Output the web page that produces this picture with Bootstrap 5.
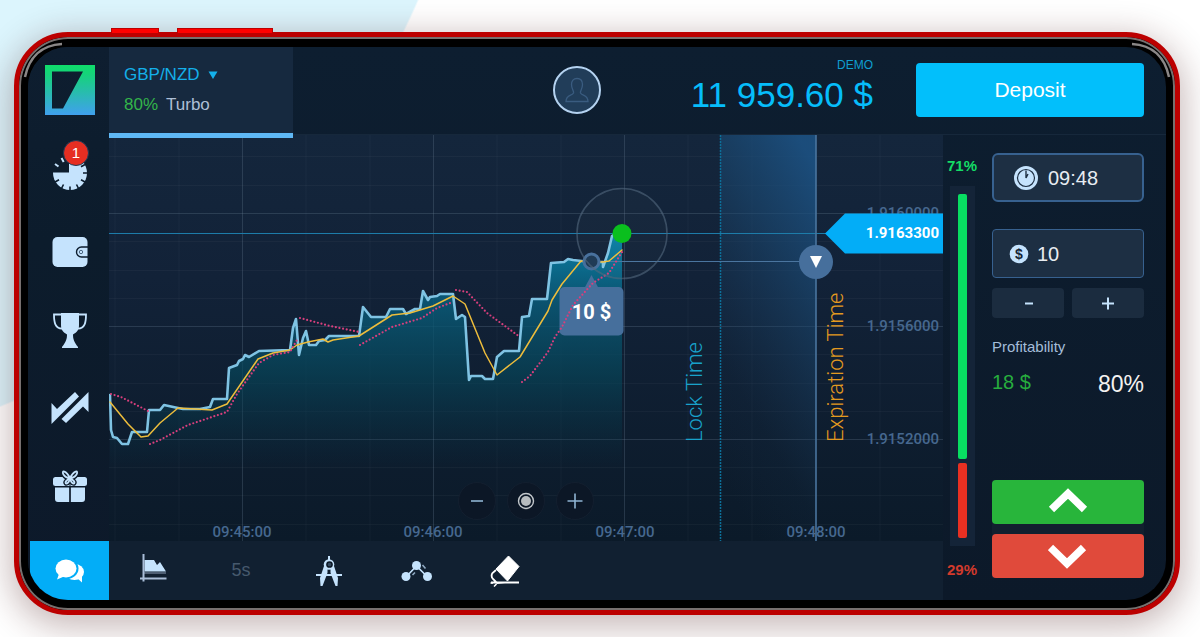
<!DOCTYPE html>
<html lang="en">
<head>
<meta charset="utf-8">
<meta name="viewport" content="width=device-width, initial-scale=1">
<title>Trading terminal</title>
<link href="https://cdn.jsdelivr.net/npm/bootstrap@5.3.0/dist/css/bootstrap.min.css" rel="stylesheet">
<style>
  :root { --ice: #c5e3fd; --sky: #03adf7; --ink: #0d1b2b; }
  body {
    font-family: "Liberation Sans", Arial, sans-serif; color: var(--ice);
    padding: 32px 20px 22px 14px;
    background: radial-gradient(circle at -290px -310px, #dcf5fd 772px, #fff 774px) no-repeat;
    overflow-x: hidden;
  }
  /* phone shell */
  .phone {
    background: #000; border: 5px solid #bc0000; border-radius: 54px;
    padding: 10px 9px; box-shadow: inset 0 0 0 2px #77706f, 0 8px 34px 4px rgba(70, 20, 20, .3);
  }
  .side-key { top: -9px; height: 5px; background: #ff0000; border: 1px solid #bc0000; border-bottom: 0; }
  .key-short { left: 92px; width: 48px; }
  .key-long { left: 158px; width: 96px; }
  .gleam { top: 3px; width: 42px; height: 40px; }
  .gleam-l { left: 2px; }
  .gleam-r { right: 2px; transform: scaleX(-1); }
  .screen { border-radius: 40px; background: linear-gradient(#0d1e30, #0c1929); }

  .rail { width: 81px; padding-left: 2px; background: linear-gradient(#0e1e30, #0c1c2c 35%, #0d192a); }
  .logo { margin: 18px 0 20px; }
  .rail-btn { height: 78px; border: 0; background: none; }
  .alert-count {
    width: 26px; height: 26px; top: 5px; left: 33px; border: 1px solid #1d3b58;
    background: #e62e22; font-size: 15px; line-height: 24px; color: #fff;
  }
  .chat-btn { height: 59px; border: 0; background: var(--sky); }

  .topbar { height: 88px; border-bottom: 1px solid #16283b; }
  .pair-tab {
    width: 184px; height: 91px; padding: 17px 15px; border: 0; border-bottom: 5px solid #5fb8f5;
    background: #16293f; font-size: 17px; line-height: 20px; z-index: 1; margin-bottom: -3px;
  }
  .pair-name { color: #14b0ea; margin-bottom: 10px; }
  .gain { color: #33b54a; }
  .soft { color: #aebfd6; }
  .account { height: 86px; }
  .avatar { width: 48px; height: 48px; border: 2px solid #b4d2f0; background: #213d59; margin-right: 90px; }
  .balance { color: #06bdfb; margin-right: 43px; padding-bottom: 7px; }
  .balance small { font-size: 12px; line-height: 14px; color: #0f9fd0; }
  .balance strong { font-size: 35px; line-height: 40px; font-weight: 400; padding-top: 3px; }
  .deposit { width: 228px; height: 54px; margin-right: 22px; background: #02bffb !important; color: #fff !important; font-size: 21px; border: 0; border-radius: 4px; }

  .chart { background: linear-gradient(#14263c, #122238 35%, #0b1a29); }
  .chart svg.plot { font-family: Roboto, sans-serif; font-size: 15px; font-weight: 500; }
  .zoomers { bottom: 21px; left: 0; gap: 11px; }
  .zoomers button { width: 38px; height: 38px; border: 1px solid #131f2f; background: #0c1726; }
  .tools { height: 59px; background: #112031; }
  .tools button { width: 88px; border: 0; background: none; font-size: 18px; color: #46596d; }

  .mood { width: 38px; font-size: 15px; font-weight: 700; line-height: 20px; padding: 21px 0 20px; }
  .up-text { color: #14dd66; }
  .down-text { color: #d33a2c; }
  .track { width: 25px; margin: 10px 0 14px; padding: 8px 0; gap: 4px; background: #142438; }
  .track div { width: 9px; border-radius: 2px; }
  .bull { flex: 71; background: #08df62; }
  .bear { flex: 20; background: #e83022; }

  .order { width: 185px; padding: 18px 22px 22px 11px; }
  .field { height: 49px; background: #1d2f43; border: 1px solid #37618f; border-radius: 4px; }
  .field input { background: none; border: 0; outline: 0; color: #e8ecf1; font-size: 20px; line-height: 24px; width: 0; }
  .field-time { border-width: 2px; border-radius: 6px; margin-bottom: 27px; padding: 0 20px; gap: 10px; }
  .field-sum { padding: 0 16px; gap: 8px; margin-bottom: 10px; }
  .steps { gap: 8px; margin-bottom: 19px; }
  .steps button { height: 30px; background: #1b2c3f; border: 0; border-radius: 4px; }
  .profit-label { font-size: 15px; line-height: 20px; color: #a4bdd9; margin-bottom: 12px; }
  .profit-sum { font-size: 20px; color: #27ad3e; line-height: 26px; }
  .profit-rate { font-size: 23px; color: #f4f2f0; line-height: 30px; }
  .deal { gap: 10px; background: #12202f; }
  .deal button { height: 44px; border: 0; border-radius: 4px; }
  .call { background: #28b53b; }
  .put { background: #e04a3b; }
</style>
</head>
<body class="min-vh-100 d-flex">
<div class="phone position-relative d-flex flex-grow-1">
  <span class="side-key key-short position-absolute"></span>
  <span class="side-key key-long position-absolute"></span>
  <svg class="gleam gleam-l position-absolute" viewBox="0 0 42 40" fill="none" stroke="#8a8787" stroke-width="2.500"><path d="M4 37C8 18 20 5 41 4"/></svg>
  <svg class="gleam gleam-r position-absolute" viewBox="0 0 42 40" fill="none" stroke="#8a8787" stroke-width="2.500"><path d="M4 37C8 18 20 5 41 4"/></svg>

  <div class="screen d-flex flex-grow-1 overflow-hidden">
    <!-- left rail -->
    <nav class="rail d-flex flex-column flex-shrink-0" aria-label="Sections">
      <a href="#" class="logo mx-auto d-block lh-1" aria-label="Home">
        <svg width="50" height="50" viewBox="0 0 50 50">
          <defs><linearGradient id="lg" x1="0" y1="0" x2="0" y2="1"><stop offset="0" stop-color="#0fde6a"/><stop offset=".2" stop-color="#16d27c"/><stop offset="1" stop-color="#40a0ee"/></linearGradient></defs>
          <path fill="url(#lg)" fill-rule="evenodd" d="M0 0H50V50H0ZM7 6.500V43.500H18L38 6.500Z"/>
        </svg>
      </a>
      <button type="button" class="rail-btn position-relative w-100 p-0" aria-label="Open deals, 1 new">
        <svg width="40" height="40" viewBox="0 0 40 40" fill="none" stroke="#c5e3fd">
          <circle cx="20" cy="19" r="17" fill="#c5e3fd" stroke="none"/>
          <path d="M0 0H19V18.500H0Z" fill="#0d1d2e" stroke="none"/>
          <path d="M11.500 4l2.200 4M5 10l3.500 2.500" stroke-width="2"/>
          <g stroke="#0d1d2e" stroke-width="1.600"><path d="M20 37v-4.500M38 19h-5M28.500 34.500l-2-4M11.500 34.500l2-4M35 28l-4-2.300M5 28l4-2.300M35 10.500l-4 2.300"/></g>
        </svg>
        <span class="alert-count position-absolute rounded-circle">1</span>
      </button>
      <button type="button" class="rail-btn w-100 p-0" aria-label="Wallet">
        <svg width="36" height="32" viewBox="0 0 36 32"><rect x="0.500" y="1" width="35" height="30" rx="5" fill="#c5e3fd"/><path d="M36 11H29.500a5 5 0 0 0 0 10H36" fill="none" stroke="#0d1d2e" stroke-width="1.400"/><circle cx="29" cy="16" r="1.700" fill="none" stroke="#4a6580" stroke-width="1"/></svg>
      </button>
      <button type="button" class="rail-btn w-100 p-0" aria-label="Tournaments">
        <svg width="36" height="36" viewBox="0 0 36 36" fill="#c5e3fd"><path d="M9 1H27V13C27 18 25 20 21 22.500C21 27 22 30 26 35V36H10V35C14 30 15 27 15 22.500C11 20 9 18 9 13Z"/><path d="M9 2.500H2C2 10 3 16.500 10 16.500M27 2.500H34C34 10 33 16.500 26 16.500" fill="none" stroke="#c5e3fd" stroke-width="1.800"/></svg>
      </button>
      <button type="button" class="rail-btn w-100 p-0" aria-label="Signals">
        <svg width="38" height="36" viewBox="0 0 38 36" fill="#c5e3fd"><path d="M0.500 13L6 19L24 2L28 6.500L0.500 34Z"/><path d="M37.500 2V22L32 16.500L15 33L10.500 29Z"/></svg>
      </button>
      <button type="button" class="rail-btn w-100 p-0" aria-label="Bonuses">
        <svg width="36" height="34" viewBox="0 0 36 34" fill="#c5e3fd"><rect x="1" y="8" width="34" height="9" rx="2.500"/><path d="M3 18.500H17.300V33H6Q3 33 3 30ZM18.700 18.500H33V30Q33 33 30 33H18.700Z"/><path d="M18 9v24" stroke="#0d1b2b"/>
          <path d="M18 9C14 1 9 1 11.500 5.500C13 8 16 9 18 9C20 9 23 8 24.500 5.500C27 1 22 1 18 9C15 11 12.500 13 14 14.500C16 15 18 11 18 9C18 11 20 15 22 14.500C23.500 13 21 11 18 9" fill="none" stroke="#0d1b2b" stroke-width="4.500"/>
          <path d="M18 9C14 1 9 1 11.500 5.500C13 8 16 9 18 9C20 9 23 8 24.500 5.500C27 1 22 1 18 9C15 11 12.500 13 14 14.500C16 15 18 11 18 9C18 11 20 15 22 14.500C23.500 13 21 11 18 9" fill="none" stroke="#c5e3fd" stroke-width="1.800"/></svg>
      </button>
      <button type="button" class="chat-btn w-100 mt-auto p-0" aria-label="Chat">
        <svg width="30" height="26" viewBox="0 0 30 26" fill="#fff"><ellipse cx="19.500" cy="14" rx="9.500" ry="8"/><path d="M22 20l5 4.500 0-7z"/><ellipse cx="11.500" cy="10.500" rx="12" ry="10.500" fill="#03adf7"/><ellipse cx="11" cy="10.500" rx="10.500" ry="9"/><path d="M4 16l-2 5.500 7-3z"/></svg>
      </button>
    </nav>

    <div class="d-flex flex-column flex-grow-1">
      <header class="topbar d-flex align-items-start">
        <button type="button" class="pair-tab text-start position-relative">
          <span class="pair-name d-flex align-items-center gap-2">GBP/NZD <svg width="10" height="8" viewBox="0 0 10 8" fill="#14b0ea"><path d="M0.500 0.500H9.500L5 8Z"/></svg></span>
          <span class="d-flex gap-2"><span class="gain">80%</span> <span class="soft">Turbo</span></span>
        </button>
        <div class="account d-flex align-items-center ms-auto">
          <button type="button" class="avatar rounded-circle p-0 d-flex align-items-center justify-content-center" aria-label="Profile">
            <svg width="24" height="26" viewBox="0 0 24 26" fill="none" stroke="#3a5c80" stroke-width="1.300"><path d="M8.500 16C9 13.500 6.500 12 6.500 7.500C6.500 4 8.500 1.500 12 1.500S17.500 4 17.500 7.500C17.500 12 15 13.500 15.500 16C17 19 23 17.500 23 24.500H1C1 17.500 7 19 8.500 16Z"/></svg>
          </button>
          <div class="balance text-end text-nowrap"><small class="d-block">DEMO</small><strong class="d-block">11 959.60 $</strong></div>
          <button type="button" class="btn deposit p-0">Deposit</button>
        </div>
      </header>

      <div class="d-flex flex-grow-1">
        <main class="d-flex flex-column flex-grow-1">
          <div class="chart position-relative flex-grow-1">
            <svg class="plot position-absolute w-100 h-100" viewBox="109 135 834 406" preserveAspectRatio="xMaxYMid slice" role="img" aria-label="GBP/NZD price chart">
              <defs>
                <linearGradient id="area" gradientUnits="userSpaceOnUse" x1="0" y1="230" x2="0" y2="470"><stop offset="0" stop-color="#0a86ad"/><stop offset=".3" stop-color="#0a5b79" stop-opacity=".85"/><stop offset=".6" stop-color="#06485c" stop-opacity=".65"/><stop offset="1" stop-color="#06384a" stop-opacity="0"/></linearGradient>
                <linearGradient id="zone" x1=".8" y1="0" x2=".4" y2="1"><stop offset="0" stop-color="#1c5182" stop-opacity=".9"/><stop offset=".3" stop-color="#1b4a74" stop-opacity=".6"/><stop offset=".75" stop-color="#1a3c5c" stop-opacity="0.100"/><stop offset="1" stop-color="#1a3c5c" stop-opacity="0"/></linearGradient>
              </defs>
              <path stroke="#fff" stroke-opacity=".035" d="M115 135V541M179 135V541M306 135V541M370 135V541M497 135V541M561 135V541M688 135V541M752 135V541M880 135V541M109 156.500H943M109 185.500H943M109 241.500H943M109 270.500H943M109 298.500H943M109 354.500H943M109 383.500H943M109 411.500H943M109 467.500H943M109 495.500H943M109 524.500H943"/>
              <path stroke="#6d8098" stroke-opacity=".28" d="M242.500 135V541M433.500 135V541M624.500 135V541M109 213.500H943M109 326.500H943M109 439.500H943"/>
              <rect x="720" y="135" width="96" height="406" fill="url(#zone)"/>
              <path fill="url(#area)" d="M110 541V395L111 430 113 437 117 438 122 444H128L132 432H147L149 410H160L164 405 178 408 183 409H200L210 407 213 399H227L229 368 237 365 239 361 243 359 245 355 249 357 259 351 290 350 293 328 296 319 299 355 303 338 306 331 309 345H316L319 341 325 340 329 336H359L363 307 371 317H386L390 309H403L406 314 415 309H420L423 291 428 300 430 297 437 296 440 294H453L456 319 462 315 465 317 469 380 471 376H482L485 379H493L497 357 504 351H519L522 317 529 316 532 299H547L551 263 564 262 568 259 573 260 603 262V267L608 253 612 236 617 233H622V541Z"/>
              <path stroke="#1d7ca9" d="M109 233.500H826"/>
              <path stroke="#0c6f99" stroke-width="1.500" stroke-dasharray="2 1" d="M720.500 135V541"/>
              <path stroke="#4a759f" stroke-width="1.600" d="M816 135V541"/>
              <path stroke="#4a759f" d="M591 261.500H816"/>
              <g fill="none" stroke-linejoin="round" stroke-linecap="round">
                <path stroke="#7fc3e3" stroke-width="2.600" d="M110 395L111 430 113 437 117 438 122 444H128L132 432H147L149 410H160L164 405 178 408 183 409H200L210 407 213 399H227L229 368 237 365 239 361 243 359 245 355 249 357 259 351 290 350 293 328 296 319 299 355 303 338 306 331 309 345H316L319 341 325 340 329 336H359L363 307 371 317H386L390 309H403L406 314 415 309H420L423 291 428 300 430 297 437 296 440 294H453L456 319 462 315 465 317 469 380 471 376H482L485 379H493L497 357 504 351H519L522 317 529 316 532 299H547L551 263 564 262 568 259 573 260 590 262H603V267L608 253 612 236 617 233"/>
                <path stroke="#edbd3c" stroke-width="1.500" d="M110 402L128 424 141 437 148 436 160 423 178 408 212 410 227 404 258 359 273 353 290 350 297 345 308 342 323 339 328 342 333 340 359 336 392 315 410 313 433 306 453 296 465 304 485 353 497 375 520 357 548 311 552 300 562 284 581 261 603 262 609 261 622 250"/>
              </g>
              <g fill="#466f9c"><path d="M584 289L591.500 275 599 289Z"/><rect x="559.500" y="287" width="64" height="48.500" rx="5"/></g>
              <text x="591.500" y="318.500" text-anchor="middle" fill="#fff" font-size="20" font-weight="700">10 $</text>
              <path fill="none" stroke="#d83f7d" stroke-width="2.200" stroke-linecap="round" stroke-dasharray="0 3.700" d="M111 394L121 397 148 411M150 444L160 440 188 425 227 412 237 394 259 363 273 355 290 352 297 340M300 318L330 326 359 332M360 345L392 327 422 318 437 308 453 302M456 290L467 292 487 313 520 337M522 382L530 376 548 352 555 337 562 327 573 305 593 283 609 273 622 252"/>
              <circle cx="591.500" cy="261.500" r="7.500" fill="#1c3853" stroke="#466f9c" stroke-width="3"/>
              <circle cx="622" cy="233.500" r="45" fill="#fff" fill-opacity=".02" stroke="#54697e" stroke-opacity=".6" stroke-width="1.600"/>
              <circle cx="622" cy="233.500" r="9.500" fill="#0abf1e"/>
              <circle cx="816" cy="262" r="17" fill="#466f9c"/><path fill="#fff" d="M810 256H822L816 268Z"/>
              <g font-size="22" font-weight="300"><text transform="translate(702 442) rotate(-90)" fill="#18a2cb">Lock Time</text><text transform="translate(843 442) rotate(-90)" fill="#e39a20">Expiration Time</text></g>
              <g fill="#46688f"><g text-anchor="middle"><text x="242" y="537">09:45:00</text><text x="433" y="537">09:46:00</text><text x="625" y="537">09:47:00</text><text x="816" y="537">09:48:00</text></g>
              <g text-anchor="end"><text x="939" y="218">1.9160000</text><text x="939" y="331">1.9156000</text><text x="939" y="444">1.9152000</text></g></g>
              <path fill="#03adf7" d="M825 233.500L845 213.500H943V253.500H845Z"/>
              <text x="939" y="238" text-anchor="end" fill="#fff" font-weight="700">1.9163300</text>
            </svg>
            <div class="zoomers position-absolute w-100 d-flex justify-content-center">
              <button type="button" class="rounded-circle p-0" aria-label="Zoom out"><svg class="d-block mx-auto" width="18" height="18" viewBox="0 0 18 18"><path d="M3 9H15" stroke="#8fb4d3" stroke-width="1.600"/></svg></button>
              <button type="button" class="rounded-circle p-0" aria-label="Center"><svg class="d-block mx-auto" width="18" height="18" viewBox="0 0 18 18"><circle cx="9" cy="9" r="7.500" fill="none" stroke="#c3c8cc" stroke-width="1.400"/><circle cx="9" cy="9" r="5" fill="#b7bcbf"/></svg></button>
              <button type="button" class="rounded-circle p-0" aria-label="Zoom in"><svg class="d-block mx-auto" width="18" height="18" viewBox="0 0 18 18"><path d="M1.500 9H16.500M9 1.500V16.500" stroke="#8fb4d3" stroke-width="1.600"/></svg></button>
            </div>
          </div>
          <div class="tools d-flex" role="toolbar" aria-label="Chart tools">
            <button type="button" class="pb-2" aria-label="Chart type"><svg width="28" height="30" viewBox="0 0 28 30"><path d="M5.500 8H15L18 13L21 10L27 19.500H5.500Z" fill="#c5e3fd"/><path d="M4.500 2V29.500M1 26.500H27.500" stroke="#a9bdd8" stroke-width="2"/><path d="M5 21H27" stroke="#a9bdd8" stroke-width=".8"/></svg></button>
            <button type="button">5s</button>
            <button type="button" aria-label="Drawing tools"><svg width="28" height="32" viewBox="0 0 28 32" fill="#c5e3fd" stroke="#c5e3fd"><path d="M14 1V7" stroke-width="2"/><path d="M1 20H27" stroke-width="2"/><path d="M10 8L5 23L5.500 31L7.500 31L12.500 18V14H15.500V18L20.500 31L22.500 31L23 23L18 8Z" stroke="none"/><path d="M12.500 18.700h3l-1.500-3.500z" fill="#112031" stroke="none"/><circle cx="14" cy="9.500" r="5.300" stroke="none"/><circle cx="14.500" cy="9.500" r="2.600" fill="#33485e" stroke="#0b1826" stroke-width="1.500"/></svg></button>
            <button type="button" aria-label="Indicators"><svg width="32" height="22" viewBox="0 0 32 22"><path d="M5 17L15.500 6L26.500 17" fill="none" stroke="#c5e3fd" stroke-width="1.600"/><path d="M11.500 15L14 12.500M21.500 5L24.500 8.500" stroke="#8fa9c2" stroke-width="1.600"/><g fill="#c5e3fd"><circle cx="5" cy="16.500" r="4.500"/><circle cx="15.500" cy="5.500" r="4.500"/><circle cx="26.500" cy="16.500" r="4.500"/></g></svg></button>
            <button type="button" aria-label="Clear"><svg width="32" height="32" viewBox="0 0 32 32"><path d="M19.500 1L30 11.500L18.500 26L7 14Z" fill="#fff" stroke="#fff" stroke-linejoin="round"/><path d="M7 15L3.500 18Q1.500 21 4 24L8 28L16 27.500M2 27.500H30" fill="none" stroke="#fff" stroke-width="1.800"/><path d="M1.500 28H4M5 31.500L7.500 29" stroke="#fff" stroke-width="1.500"/></svg></button>
          </div>
        </main>

        <div class="mood d-flex flex-column align-items-center flex-shrink-0">
          <span class="up-text">71%</span>
          <div class="track d-flex flex-column align-items-center flex-grow-1"><div class="bull"></div><div class="bear"></div></div>
          <span class="down-text">29%</span>
        </div>

        <form class="order d-flex flex-column flex-shrink-0">
          <label class="field field-time d-flex align-items-center">
            <svg class="flex-shrink-0" width="24" height="24" viewBox="0 0 24 24"><circle cx="12" cy="12" r="12" fill="#c5e3fd"/><circle cx="12" cy="12" r="8.500" fill="none" stroke="#1d2f43" stroke-width="1.200"/><path d="M12 4.500V12L14 8" stroke="#1d2f43" stroke-width="1.400" fill="none"/></svg>
            <input type="text" value="09:48" aria-label="Expiration time" class="p-0 flex-grow-1">
          </label>
          <label class="field field-sum d-flex align-items-center">
            <svg class="flex-shrink-0" width="20" height="20" viewBox="0 0 20 20"><circle cx="10" cy="10" r="9.300" fill="#c5e3fd"/><text x="10" y="15" text-anchor="middle" font-size="14" font-weight="700" fill="#152536">$</text></svg>
            <input type="text" value="10" aria-label="Amount" class="p-0 flex-grow-1">
          </label>
          <div class="steps d-flex">
            <button type="button" class="p-0 flex-fill" aria-label="Decrease"><svg class="d-block mx-auto" width="14" height="14" viewBox="0 0 14 14"><path d="M4 7.500H12" stroke="#c5e3fd" stroke-width="2"/></svg></button>
            <button type="button" class="p-0 flex-fill" aria-label="Increase"><svg class="d-block mx-auto" width="14" height="14" viewBox="0 0 14 14"><path d="M1 7.500H13M7 1.500V13.500" stroke="#c5e3fd" stroke-width="2"/></svg></button>
          </div>
          <div class="profit-label">Profitability</div>
          <div class="d-flex justify-content-between"><span class="profit-sum">18 $</span><span class="profit-rate">80%</span></div>
          <div class="deal d-flex flex-column mt-auto">
            <button type="button" class="call p-0" aria-label="Higher"><svg class="d-block mx-auto" width="40" height="28" viewBox="0 0 40 28"><path d="M3.500 21.500L20 5.500L36.500 21.500" fill="none" stroke="#fff" stroke-width="7.500"/></svg></button>
            <button type="button" class="put p-0" aria-label="Lower"><svg class="d-block mx-auto" width="40" height="28" viewBox="0 0 40 28"><path d="M2.500 5.500L19 21.500L35.500 5.500" fill="none" stroke="#fff" stroke-width="7.500"/></svg></button>
          </div>
        </form>
      </div>
    </div>
  </div>
</div>
<script src="https://cdn.jsdelivr.net/npm/bootstrap@5.3.0/dist/js/bootstrap.bundle.min.js"></script>
</body>
</html>
